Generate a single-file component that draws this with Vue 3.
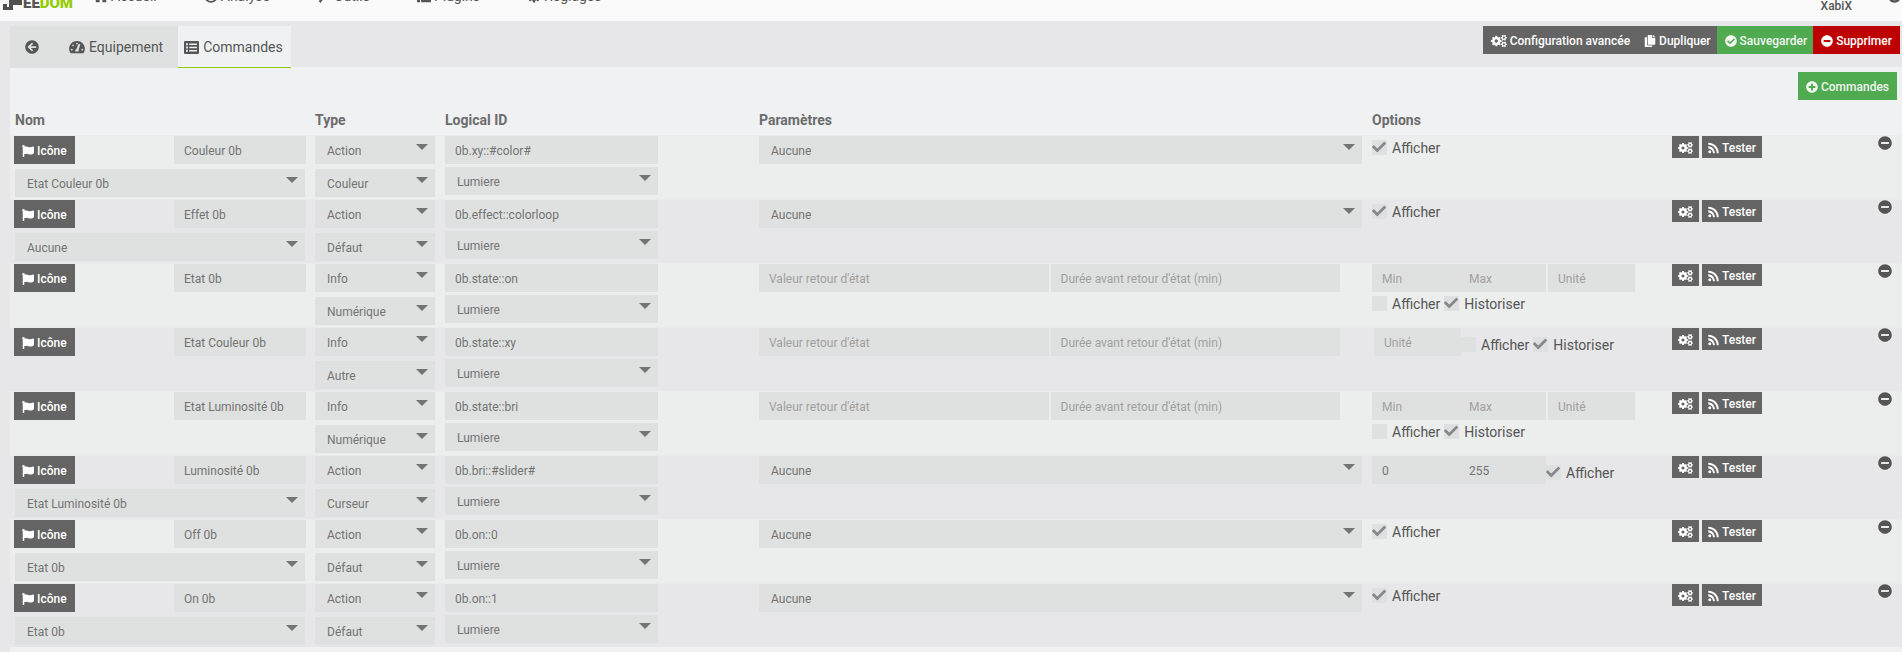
<script setup>
import { h, reactive } from 'vue'

function gear(cx, cy, inner, outer, hole, teeth) {
  const pts = []
  const step = (Math.PI * 2) / teeth
  for (let i = 0; i < teeth; i++) {
    const a = i * step
    for (const [r, o] of [[inner, -0.32], [outer, -0.22], [outer, 0.22], [inner, 0.32]]) {
      pts.push(`${Math.round(cx + r * Math.cos(a + o * step))} ${Math.round(cy + r * Math.sin(a + o * step))}`)
    }
  }
  return `M${pts.join('L')}ZM${cx - hole} ${cy}a${hole} ${hole} 0 1 0 ${hole * 2} 0a${hole} ${hole} 0 1 0 ${-hole * 2} 0Z`
}

const disc = 'M256 8C119 8 8 119 8 256s111 248 248 248 248-111 248-248S393 8 256 8z'
const icons = {
  cogs: [640, gear(212, 256, 168, 214, 68, 8) + gear(514, 122, 90, 124, 42, 6) + gear(514, 390, 90, 124, 42, 6)],
  copy: [448, 'M320 448v40c0 13-11 24-24 24H24c-13 0-24-11-24-24V120c0-13 11-24 24-24h72v296c0 31 25 56 56 56h168zm0-344V0H152c-13 0-24 11-24 24v368c0 13 11 24 24 24h272c13 0 24-11 24-24V128H344c-13 0-24-11-24-24zm121-31L375 7a24 24 0 0 0-17-7h-6v96h96v-6a24 24 0 0 0-7-17z'],
  ok: [512, disc + 'M227.3 387.3l184-184c6.3-6.2 6.3-16.4 0-22.6l-22.6-22.6c-6.3-6.3-16.4-6.3-22.7 0L216 308.1l-70-70c-6.3-6.3-16.4-6.3-22.7 0l-22.6 22.6c-6.3 6.2-6.3 16.4 0 22.6l104 104c6.2 6.3 16.3 6.3 22.6 0z'],
  minus: [512, disc + 'M124 296c-6.6 0-12-5.4-12-12v-56c0-6.6 5.4-12 12-12h264c6.6 0 12 5.4 12 12v56c0 6.6-5.4 12-12 12H124z'],
  plus: [512, disc + 'm144 276c0 6.6-5.4 12-12 12h-92v92c0 6.6-5.4 12-12 12h-56c-6.6 0-12-5.4-12-12v-92h-92c-6.6 0-12-5.4-12-12v-56c0-6.6 5.4-12 12-12h92v-92c0-6.6 5.4-12 12-12h56c6.6 0 12 5.4 12 12v92h92c6.6 0 12 5.4 12 12v56z'],
  back: [512, 'M256 504C119 504 8 393 8 256S119 8 256 8s248 111 248 248-111 248-248 248zm28.900-143.600L209.400 288H392c13.300 0 24-10.700 24-24v-16c0-13.300-10.700-24-24-24H209.400l75.500-72.400c9.700-9.300 9.900-24.800.4-34.300l-11-10.900c-9.400-9.400-24.600-9.400-33.900 0L107.700 239c-9.400 9.400-9.400 24.600 0 33.900l132.700 132.700c9.400 9.400 24.600 9.400 33.900 0l11-10.900c9.500-9.500 9.300-25-.4-34.300z'],
  check: [512, 'M173.900 439.400l-166.400-166.400c-10-10-10-26.200 0-36.200l36.200-36.200c10-10 26.200-10 36.200 0L192 312.700 432.100 72.600c10-10 26.200-10 36.200 0l36.200 36.200c10 10 10 26.200 0 36.200l-294.400 294.400c-10 10-26.200 10-36.200 0z'],
  flag: [512, 'M349.600 98.800C296 98.800 251.700 64 184.300 64c-25 0-47.300 4.400-68 12a56 56 0 0 0 3.600-23.500C118.100 24 94.800 1.200 66.300 0 34.300-1.300 8 24.300 8 56c0 19 9.500 35.800 24 45.900V488c0 13.300 10.700 24 24 24h16c13.300 0 24-10.700 24-24v-94.400c28.300-12 63.600-22.100 114.400-22.100 53.600 0 97.900 34.800 165.200 34.800 48.200 0 86.700-16.300 122.500-40.900 8.800-5.900 13.900-15.800 13.900-26.400v-243c0-23.400-24.300-38.900-45.500-29-34.300 15.900-76.400 31.800-116.900 31.800z'],
  rss: [448, 'M128 416a64 64 0 1 1-128 0 64 64 0 0 1 128 0zM0 184v72c0 8 7 15 15 16 102 6 184 88 190 193 1 8 8 15 16 15h48c9 0 16-8 16-17C276 309 155 187 17 176c-9-1-17 6-17 16zM0 48v48c0 9 7 16 15 16 192 8 345 162 353 353 0 8 7 15 16 15h48c9 0 17-7 16-17C439 227 254 41 17 32 8 32 0 39 0 48z'],
  gauge: [576, 'M288 32C129 32 0 161 0 320c0 53 14 102 39 145 6 9 16 15 27 15h444c11 0 21-6 27-15 25-43 39-92 39-145C576 161 447 32 288 32zm0 64a32 32 0 1 1 0 64 32 32 0 0 1 0-64zM96 384a32 32 0 1 1 0-64 32 32 0 0 1 0 64zm48-160a32 32 0 1 1 0-64 32 32 0 0 1 0 64zm247-77c12 4 20 17 16 30l-62 188c10 15 14 34 2 56H229c-14-30-3-78 40-90l61-168c4-13 32-20 61-16zm89 237a32 32 0 1 1 0-64 32 32 0 0 1 0 64z'],
  list: [512, 'M464 32H48C21 32 0 54 0 80v352c0 27 21 48 48 48h416c27 0 48-21 48-48V80c0-26-21-48-48-48zM70 112h62v64H70zM180 120h262v48H180zM70 224h62v64H70zM180 232h262v48H180zM70 336h62v64H70zM180 344h262v48H180z'],
  home: [512, 'M256 40L0 260h64v220h140V330h104v150h140V260h64z'],
  analyse: [512, 'M256 8a248 248 0 1 0 248 248h-64a184 184 0 1 1-184-184z'],
  tools: [512, 'M130 512l-60-60 60-120L80 220l90-90 80 70L400 60l60 60-160 170-60 60z'],
  tasks: [512, 'M0 390h110v90H0zM150 400h362v80H150zM150 220h362v64H150zM0 200h110v90H0z'],
  cog: [512, gear(256, 256, 180, 246, 80, 8)],
  help: [512, disc + 'M220 330h72v72h-72z'],
}

const Icon = (props) => {
  const [w, d] = icons[props.name]
  return h('svg', { viewBox: `0 0 ${w} 512`, fill: 'currentColor', 'fill-rule': 'evenodd', 'aria-hidden': 'true' }, [h('path', { d })])
}
Icon.props = ['name']

const menu = [
  ['home', 'Accueil'],
  ['analyse', 'Analyse'],
  ['tools', 'Outils'],
  ['tasks', 'Plugins'],
  ['cog', 'Réglages'],
]

const action = (name, state, subtype, id, extra = {}) => ({ name, state, type: 'Action', subtype, id, show: true, bounds: null, ...extra })
const info = (name, subtype, id, bounds) => ({ name, state: null, type: 'Info', subtype, id, show: false, history: true, unit: true, bounds })

const rows = reactive([
  action('Couleur 0b', 'Etat Couleur 0b', 'Couleur', '0b.xy::#color#'),
  action('Effet 0b', 'Aucune', 'Défaut', '0b.effect::colorloop'),
  info('Etat 0b', 'Numérique', '0b.state::on', { min: '', max: '' }),
  info('Etat Couleur 0b', 'Autre', '0b.state::xy', null),
  info('Etat Luminosité 0b', 'Numérique', '0b.state::bri', { min: '', max: '' }),
  action('Luminosité 0b', 'Etat Luminosité 0b', 'Curseur', '0b.bri::#slider#', { bounds: { min: '0', max: '255' } }),
  action('Off 0b', 'Etat 0b', 'Défaut', '0b.on::0'),
  action('On 0b', 'Etat 0b', 'Défaut', '0b.on::1'),
])
</script>

<template>
  <div class="page">
    <header class="top">
      <a class="logo" href="#" aria-label="Jeedom">
        <svg class="mark" viewBox="0 0 20 14" aria-hidden="true">
          <path d="M0 8h4v3h2V4h5V0h8v9h-9v5H0z" fill="#505050" />
        </svg>
        <span>EE</span><span class="green">DOM</span>
      </a>
      <nav class="menu">
        <a v-for="[icon, label] in menu" :key="label" href="#"><Icon :name="icon" class="i14" />{{ label }}</a>
      </nav>
      <a class="user" href="#">XabiX</a>
      <a class="help" href="#" aria-label="Aide"><Icon name="help" class="i13" /></a>
    </header>

    <main class="content">
      <div class="bar">
        <nav class="tabs">
          <a href="#" aria-label="Retour"><Icon name="back" class="i14" /></a>
          <a href="#"><Icon name="gauge" class="i16" />Equipement</a>
          <a href="#" class="active"><Icon name="list" class="i15 tall" />Commandes</a>
        </nav>
        <div class="tools">
          <button type="button"><Icon name="cogs" class="i16" />Configuration avancée</button>
          <button type="button"><Icon name="copy" class="i12" />Dupliquer</button>
          <button type="button" class="success"><Icon name="ok" class="i12" />Sauvegarder</button>
          <button type="button" class="danger"><Icon name="minus" class="i12" />Supprimer</button>
        </div>
      </div>

      <section class="panel">
        <div class="add">
          <button type="button" class="success"><Icon name="plus" class="i12" />Commandes</button>
        </div>
        <table>
          <colgroup>
            <col class="c-name" /><col class="c-type" /><col class="c-id" /><col /><col class="c-opt" /><col class="c-act" />
          </colgroup>
          <thead>
            <tr>
              <th>Nom</th><th>Type</th><th>Logical ID</th><th>Paramètres</th><th>Options</th><td></td>
            </tr>
          </thead>
          <tbody>
            <tr v-for="row in rows" :key="row.id">
              <td class="name">
                <div class="line between">
                  <button type="button"><Icon name="flag" class="i12" />Icône</button>
                  <input v-model="row.name" class="field name-field" type="text" aria-label="Nom" />
                </div>
                <div v-if="row.state" class="select state">
                  <select aria-label="Information liée"><option>{{ row.state }}</option></select>
                </div>
              </td>
              <td>
                <div class="select"><select aria-label="Type"><option>{{ row.type }}</option></select></div>
                <div class="select below"><select aria-label="Sous-type"><option>{{ row.subtype }}</option></select></div>
              </td>
              <td>
                <div class="id-group">
                  <input v-model="row.id" class="field" type="text" aria-label="Logical ID" />
                  <div class="select"><select aria-label="Catégorie"><option>Lumiere</option></select></div>
                </div>
              </td>
              <td>
                <div v-if="row.type === 'Action'" class="select">
                  <select aria-label="Paramètre"><option>Aucune</option></select>
                </div>
                <div v-else class="line returns">
                  <input class="field" type="text" placeholder="Valeur retour d'état" aria-label="Valeur retour d'état" />
                  <input class="field" type="text" placeholder="Durée avant retour d'état (min)" aria-label="Durée avant retour d'état (min)" />
                </div>
              </td>
              <td>
                <div class="options">
                  <template v-if="row.bounds">
                    <input v-model="row.bounds.min" class="field small" type="text" placeholder="Min" aria-label="Min" />
                    <input v-model="row.bounds.max" class="field small" type="text" placeholder="Max" aria-label="Max" />
                  </template>
                  <input v-if="row.unit" class="field small unit" type="text" placeholder="Unité" aria-label="Unité" />
                  <div class="checks">
                    <label>
                      <span class="box"><input v-model="row.show" type="checkbox" /><Icon v-if="row.show" name="check" class="tick" /></span>Afficher
                    </label>
                    <label v-if="'history' in row">
                      <span class="box"><input v-model="row.history" type="checkbox" /><Icon v-if="row.history" name="check" class="tick" /></span>Historiser
                    </label>
                  </div>
                </div>
              </td>
              <td>
                <div class="actions">
                  <button type="button" class="xs" aria-label="Configurer"><Icon name="cogs" class="i15" /></button>
                  <button type="button" class="xs"><Icon name="rss" class="i11" />Tester</button>
                  <button type="button" class="remove" aria-label="Supprimer la commande"><Icon name="minus" class="i14" /></button>
                </div>
              </td>
            </tr>
          </tbody>
        </table>
      </section>
    </main>
  </div>
</template>

<style>
body {
  margin: 0;
  background: #e7e7e9;
}
</style>

<style scoped>
.page {
  display: flex;
  flex-direction: column;
  min-height: 100vh;
  overflow: hidden;
  font: 14px/20px Roboto, "Liberation Sans", sans-serif;
  color: #555;
}
a {
  color: inherit;
  text-decoration: none;
}
svg {
  display: block;
  flex: none;
}
.i11 { width: 11px; height: 12px; }
.i12 { width: 12px; height: 12px; }
.i13 { width: 13px; height: 13px; }
.i14 { width: 14px; height: 14px; }
.i15 { width: 15px; height: 12px; }
.i15.tall { height: 15px; }
.i16 { width: 16px; height: 14px; }

.top {
  display: flex;
  align-items: center;
  height: 50px;
  margin-top: -29px;
  padding: 0 1px 0 3px;
  background: #fafafa;
}
.logo {
  display: flex;
  align-items: center;
  align-self: flex-end;
  height: 36px;
  width: 68px;
  margin-right: 23px;
  font-size: 15px;
  font-weight: 900;
}
.mark {
  width: 20px;
  height: 14px;
}
.green {
  color: #93cc01;
}
.menu {
  display: flex;
  gap: 47px;
}
.menu a {
  display: flex;
  align-items: center;
  gap: 3px;
}
.user {
  align-self: flex-end;
  margin: 0 36px 5px auto;
  font-size: 12px;
  font-weight: 500;
}

.content {
  flex: 1;
  display: flex;
  flex-direction: column;
  padding: 5px 0 0 10px;
}
.bar {
  position: relative;
  z-index: 1;
  display: flex;
  justify-content: space-between;
  height: 41px;
}
.tabs {
  display: flex;
  height: 42px;
  background: #dfe1e0;
}
.tabs a {
  display: flex;
  align-items: center;
  gap: 4px;
  padding: 0 15px;
}
.tabs .active {
  padding: 0 8px 0 6px;
  background: #eff1f3;
  box-shadow: inset 0 -1px #93cc01;
}
.tools {
  display: flex;
  align-items: flex-start;
  padding-right: 2px;
}
button {
  display: flex;
  align-items: center;
  gap: 3px;
  height: 28px;
  padding: 2px 8px 0;
  border: 0;
  background: #646464;
  color: #fff;
  font: 500 12px/18px Roboto, "Liberation Sans", sans-serif;
}
.tools button {
  padding-right: 6px;
}
.tools button:last-child {
  padding-right: 8px;
}
button.success {
  background: #50aa50;
  color: #f0f5f0;
}
button.danger {
  background: #bd0000;
}

.panel {
  flex: 1;
  background: #eff1f3;
}
.add {
  display: flex;
  justify-content: flex-end;
  padding: 5px 5px 5px 0;
}
table {
  width: 100%;
  table-layout: fixed;
  border-spacing: 0;
}
.c-name { width: 300px; }
.c-type { width: 130px; }
.c-id { width: 314px; }
.c-opt { width: 300px; }
.c-act { width: 235px; }
th {
  height: 30px;
  padding: 0 5px;
  text-align: left;
  font-weight: 700;
  color: #6c6c6c;
}
tbody td {
  height: 63px;
  padding: 0 5px;
  border-top: 1px solid #eaebec;
  vertical-align: top;
}
tbody td.name {
  padding: 0 4px;
}
tbody tr:nth-child(odd) {
  background: #eceeed;
}
tbody tr:nth-child(even) {
  background: #e7e7e9;
}
.line {
  display: flex;
  gap: 2px;
}
.between {
  justify-content: space-between;
}
.field,
select {
  box-sizing: border-box;
  display: block;
  width: 100%;
  min-width: 0;
  height: 28px;
  margin: 0;
  padding: 2px 10px 0;
  border: 0;
  border-radius: 0;
  background: #dfe1e0;
  color: #737373;
  font: 12px/18px Roboto, "Liberation Sans", sans-serif;
}
.field::placeholder {
  color: #9f9f9f;
}
select {
  appearance: none;
  padding: 2px 24px 0 12px;
}
.select {
  position: relative;
}
.select::after {
  content: "";
  position: absolute;
  top: 8px;
  right: 7px;
  border: 6px solid transparent;
  border-top-color: #737573;
  border-bottom: 0;
  pointer-events: none;
}
.name-field {
  width: 132px;
}
.state {
  margin: 5px 1px 0;
}
.below {
  margin-top: 5px;
}
.id-group {
  display: flex;
  flex-direction: column;
  gap: 3px;
  width: 70%;
}
.returns {
  padding-right: 22px;
}
.options {
  display: flex;
  flex-wrap: wrap;
  align-items: flex-end;
}
.small {
  width: 87px;
}
.unit {
  margin-left: 2px;
}
.checks {
  display: flex;
  gap: 4px;
}
label {
  display: flex;
  align-items: center;
  gap: 5px;
  height: 23px;
}
.box {
  position: relative;
  width: 15px;
  height: 15px;
}
.box input {
  appearance: none;
  display: block;
  width: 15px;
  height: 15px;
  margin: 0;
  background: #dfe1e0;
}
.tick {
  position: absolute;
  top: 0;
  left: 0;
  width: 14px;
  height: 14px;
  color: #87878f;
  pointer-events: none;
}
.actions {
  display: flex;
  gap: 3px;
}
button.xs {
  height: 22px;
  padding: 1px 6px 0;
}
button.remove {
  height: 14px;
  margin: 0 5px 0 auto;
  padding: 0;
  background: none;
  color: #555;
}
</style>
